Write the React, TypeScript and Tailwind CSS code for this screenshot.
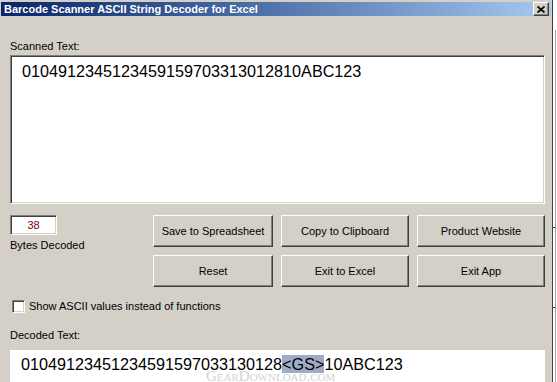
import React from "react";

const font = { fontFamily: '"Liberation Sans", Arial, sans-serif' };

function Button({ label, className = "" }: { label: string; className?: string }) {
  return (
    <div
      className={`h-[32px] flex items-center justify-center bg-[#d4d0c8] border border-t-white border-l-white border-b-[#404040] border-r-[#404040] shadow-[inset_-1px_-1px_0_#808080] text-[11px] text-black ${className}`}
    >
      {label}
    </div>
  );
}

export default function App() {
  return (
    <div className="w-[557px] h-[382px] flex bg-white overflow-hidden" style={font}>
      {/* window */}
      <div className="w-[553px] h-full flex flex-col bg-[#d4d0c8] border-r border-[#404040] pt-[2px] pl-[1px]">
        {/* title bar */}
        <div className="h-[20px] mr-[1px] flex items-center justify-between pl-[3px] pr-[2px] bg-gradient-to-r from-[#0a246a] to-[#a6caf0]">
          <span className="text-white font-bold text-[11px] leading-none">
            Barcode Scanner ASCII String Decoder for Excel
          </span>
          <div className="w-[16px] h-[14px] flex items-center justify-center bg-[#d4d0c8] border border-t-white border-l-white border-b-[#404040] border-r-[#404040] shadow-[inset_-1px_-1px_0_#808080]">
            <svg width="8" height="7" viewBox="0 0 8 7">
              <path d="M0.5 0.5 L7.5 6.5 M7.5 0.5 L0.5 6.5" stroke="#000" strokeWidth="1.8" />
            </svg>
          </div>
        </div>

        {/* body */}
        <div className="flex flex-col pl-[9px] pr-[7px]">
          <div className="mt-[23px] text-[11px] leading-[14px] text-black">Scanned Text:</div>
          <div className="mt-[2px] h-[149px] bg-white border border-t-[#808080] border-l-[#808080] border-b-white border-r-white shadow-[inset_1px_1px_0_#404040,inset_-1px_-1px_0_#d4d0c8] px-[11px] pt-[4px]">
            <span className="text-[16.2px] leading-[20px] text-black">0104912345123459159703313012810ABC123</span>
          </div>

          {/* controls */}
          <div className="mt-[11px] flex">
            <div className="w-[144px] flex flex-col">
              <div className="w-[47px] h-[20px] flex items-center justify-center bg-white border border-t-[#808080] border-l-[#808080] border-b-white border-r-white shadow-[inset_1px_1px_0_#404040,inset_-1px_-1px_0_#d4d0c8] text-[11px] text-[#800000]">
                38
              </div>
              <div className="mt-[3px] text-[11px] leading-[14px] text-black">Bytes Decoded</div>
            </div>
            <div className="grid grid-cols-[120px_128px_128px] gap-x-[8px] gap-y-[8px]">
              <Button label="Save to Spreadsheet" />
              <Button label="Copy to Clipboard" />
              <Button label="Product Website" />
              <Button label="Reset" />
              <Button label="Exit to Excel" />
              <Button label="Exit App" />
            </div>
          </div>

          {/* checkbox */}
          <div className="mt-[12px] flex items-center">
            <div className="ml-[2px] w-[13px] h-[13px] bg-white border border-t-[#808080] border-l-[#808080] border-b-white border-r-white shadow-[inset_1px_1px_0_#404040,inset_-1px_-1px_0_#d4d0c8]" />
            <span className="ml-[4px] text-[11px] leading-[14px] text-black">
              Show ASCII values instead of functions
            </span>
          </div>

          <div className="mt-[15px] text-[11px] leading-[14px] text-black">Decoded Text:</div>
          <div className="mt-[8px] h-[40px] bg-white pl-[11px] pt-[4px] flex flex-col">
            <span className="text-[16.2px] leading-[20px] text-black whitespace-nowrap">
              01049123451234591597033130128<span className="bg-[#9eaac6]">&lt;GS&gt;</span>10ABC123
            </span>
            <span
              className="ml-[185px] -mt-[4px] text-[15px] leading-[12px] text-[#d2d2d2]"
              style={{ fontFamily: '"Liberation Serif", serif', fontVariant: "small-caps" }}
            >
              GearDownload.com
            </span>
          </div>
        </div>
      </div>

      {/* strip of the desktop behind */}
      <div className="flex-1 relative bg-white">
        <div className="absolute left-[2px] top-[30px] bottom-0 w-px bg-[#a0a0a0]" />
        <div className="absolute left-0 top-[227px] w-[2px] h-px bg-[#1f3f9f]" />
        <div className="absolute left-0 top-[307px] w-[2px] h-px bg-[#1f3f9f]" />
      </div>
    </div>
  );
}
